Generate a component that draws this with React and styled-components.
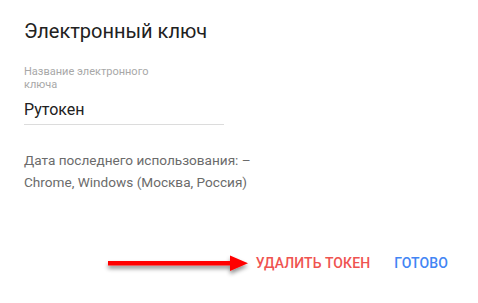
import React from "react";
import styled, { createGlobalStyle } from "styled-components";

const GlobalStyle = createGlobalStyle`
  html, body {
    margin: 0;
    padding: 0;
    background: #fff;
    font-family: Roboto, "Liberation Sans", Arial, sans-serif;
  }
`;

const Dialog = styled.div`
  position: relative;
  width: 478px;
  height: 303px;
  box-sizing: border-box;
  padding: 18px 24px 0 24px;
  display: flex;
  flex-direction: column;
`;

const Title = styled.h2`
  margin: 0;
  font-size: 20px;
  font-weight: 400;
  line-height: 26px;
  color: #212121;
`;

const Field = styled.div`
  margin-top: 21px;
  width: 200px;
  border-bottom: 1px solid #dcdcdc;
  padding-bottom: 4px;
`;

const FieldLabel = styled.label`
  display: block;
  width: 150px;
  font-size: 11px;
  line-height: 13px;
  color: #a8a8a8;
`;

const FieldValue = styled.div`
  margin-top: 9px;
  font-size: 16px;
  line-height: 20px;
  color: #212121;
`;

const Info = styled.p`
  margin: 24px 0 0;
  font-size: 13.6px;
  line-height: 22px;
  color: #6b6b6b;
`;

const Actions = styled.div`
  margin-top: auto;
  margin-bottom: 28px;
  margin-right: -2px;
  display: flex;
  justify-content: flex-end;
  gap: 8px;
`;

const TextButton = styled.button`
  background: none;
  border: none;
  padding: 4px 8px;
  font-family: inherit;
  font-size: 14px;
  font-weight: 500;
  letter-spacing: 0.1px;
  text-transform: uppercase;
  color: ${(p) => p.$color};
  cursor: pointer;
`;

const Arrow = styled.svg`
  position: absolute;
  left: 104px;
  top: 253px;
  overflow: visible;
`;

export default function App() {
  return (
    <>
      <GlobalStyle />
      <Dialog>
        <Title>Электронный ключ</Title>
        <Field>
          <FieldLabel>Название электронного ключа</FieldLabel>
          <FieldValue>Рутокен</FieldValue>
        </Field>
        <Info>
          Дата последнего использования: –
          <br />
          Chrome, Windows (Москва, Россия)
        </Info>
        <Actions>
          <TextButton $color="#ef5350">Удалить токен</TextButton>
          <TextButton $color="#4285f4">Готово</TextButton>
        </Actions>
        <Arrow width="150" height="24" viewBox="0 0 150 24">
          <defs>
            <filter id="sh" x="-10%" y="-50%" width="120%" height="250%">
              <feDropShadow dx="0" dy="3" stdDeviation="2" floodColor="#000" floodOpacity="0.45" />
            </filter>
          </defs>
          <g filter="url(#sh)">
            <rect x="4" y="8" width="124" height="4.5" fill="#ff0000" />
            <polygon points="126,2.5 144,10.2 126,18" fill="#ff0000" />
          </g>
        </Arrow>
      </Dialog>
    </>
  );
}
